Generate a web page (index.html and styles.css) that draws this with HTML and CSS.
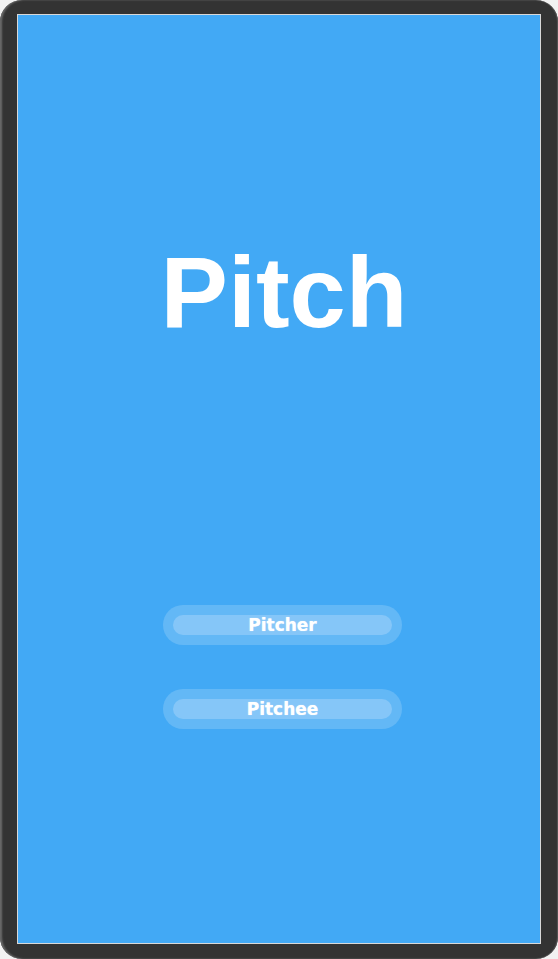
FILE: index.html
```html
<!DOCTYPE html>
<html>
<head>
<meta charset="utf-8">
<link rel="stylesheet" href="styles.css">
</head>
<body>
<div class="device">
  <div class="screen">
    <h1 class="title">Pitch</h1>
    <div class="actions">
      <button class="pill"><span class="pill-inner">Pitcher</span></button>
      <button class="pill"><span class="pill-inner">Pitchee</span></button>
    </div>
  </div>
</div>
</body>
</html>
```
FILE: styles.css
```css
html, body {
  margin: 0;
  padding: 0;
  background: #f2f2f2;
}
.device {
  width: 558px;
  height: 959px;
  box-sizing: border-box;
  background: #333333;
  border-radius: 22px;
  padding: 14px 17px 15px 17px;
  box-shadow: inset 2px 0 2px #6a6a6a, inset -1px 0 1px #555;
}
.screen {
  height: 100%;
  box-sizing: border-box;
  border: 1px solid #d8d8d8;
  background: #42a9f5;
  display: flex;
  flex-direction: column;
  align-items: center;
}
.title {
  margin: 227px 0 0 0;
  padding-left: 10px;
  font-family: "Liberation Sans", Arial, sans-serif;
  font-weight: bold;
  font-size: 101px;
  line-height: 1;
  color: #ffffff;
}
.actions {
  margin-top: 262px;
  padding-left: 7px;
  display: flex;
  flex-direction: column;
  gap: 44px;
}
.pill {
  width: 239px;
  height: 40px;
  box-sizing: border-box;
  padding: 10px;
  border: none;
  border-radius: 20px;
  background: #63b8f6;
  display: flex;
  cursor: pointer;
}
.pill-inner {
  flex: 1;
  height: 20px;
  border-radius: 10px;
  background: #85c6f8;
  color: #ffffff;
  font-family: "DejaVu Sans", Verdana, sans-serif;
  font-weight: bold;
  font-size: 17px;
  line-height: 21px;
  text-align: center;
  text-shadow: 0 0 1px rgba(255,255,255,0.7);
}
```
